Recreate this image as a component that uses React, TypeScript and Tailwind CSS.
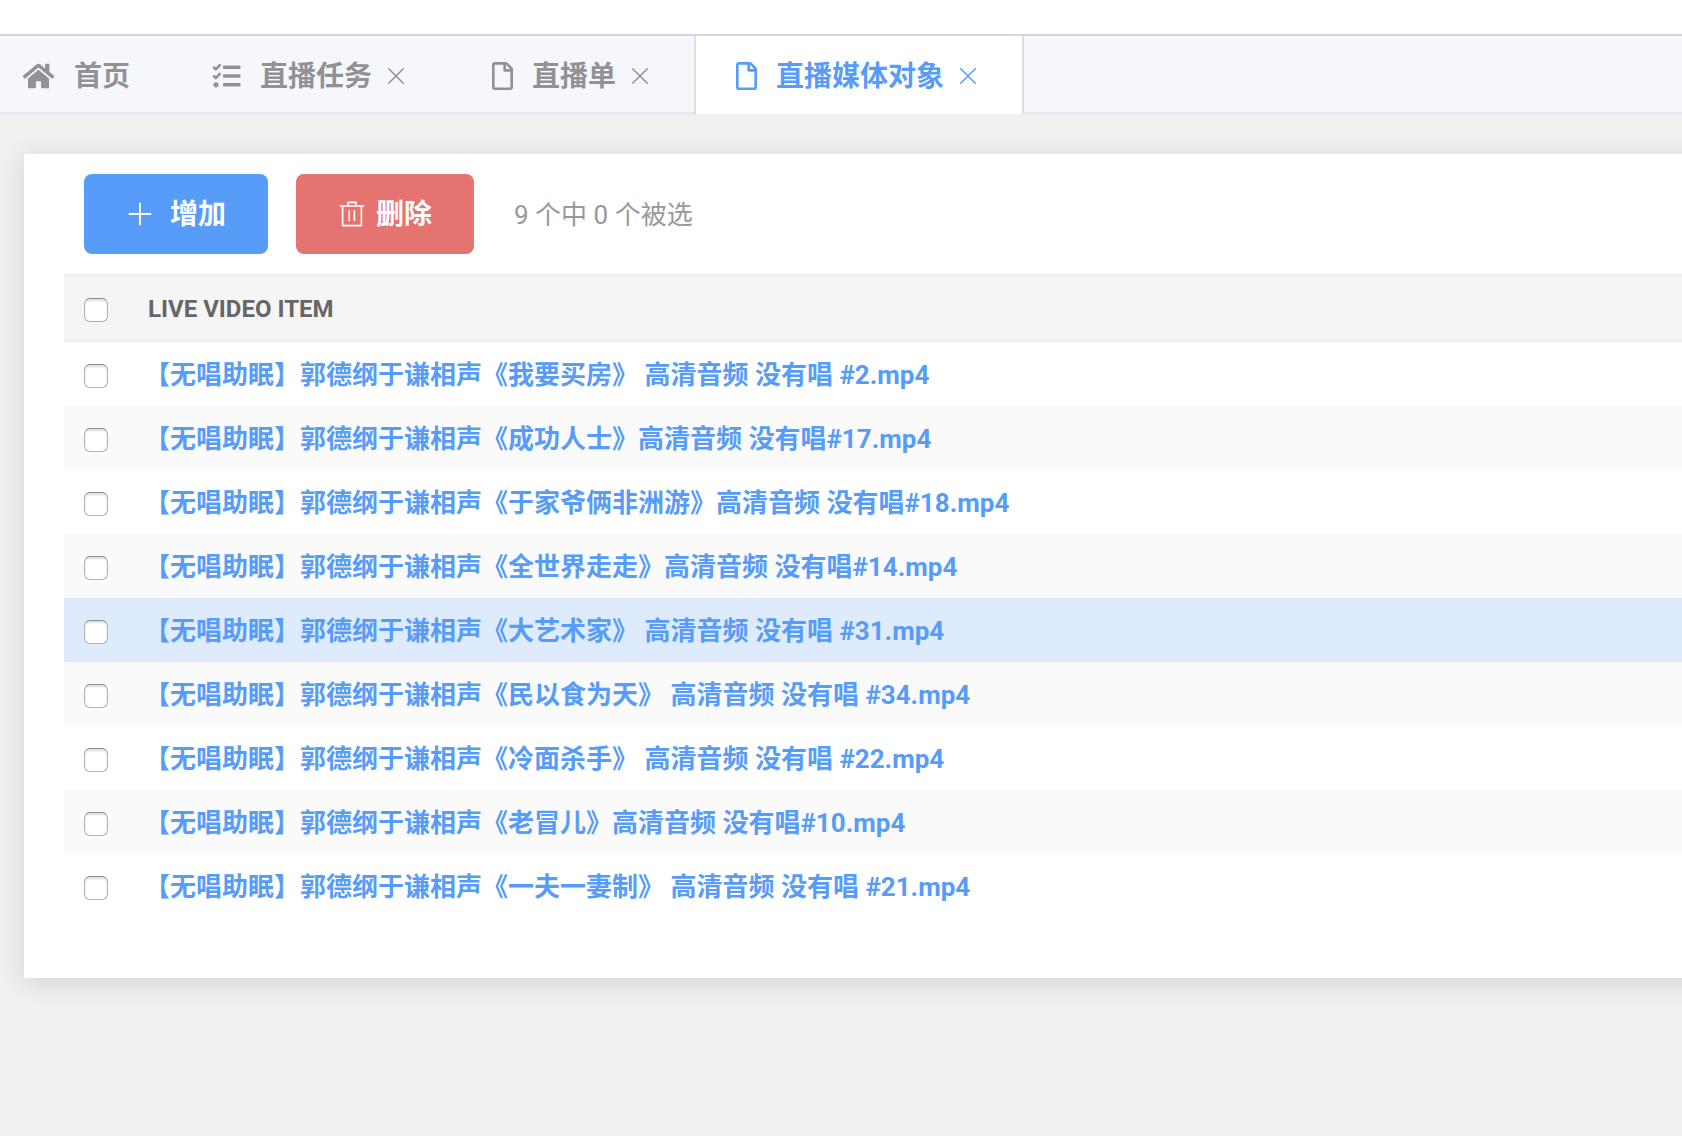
import { useState } from 'react'
import { FaHome, FaTasks, FaRegFile } from 'react-icons/fa'

const tabs = [
  { name: '首页', icon: 'home', closable: false },
  { name: '直播任务', icon: 'tasks', closable: true },
  { name: '直播单', icon: 'file', closable: true },
  { name: '直播媒体对象', icon: 'file', closable: true },
]

const items = [
  '【无唱助眠】郭德纲于谦相声《我要买房》 高清音频 没有唱 #2.mp4',
  '【无唱助眠】郭德纲于谦相声《成功人士》高清音频 没有唱#17.mp4',
  '【无唱助眠】郭德纲于谦相声《于家爷俩非洲游》高清音频 没有唱#18.mp4',
  '【无唱助眠】郭德纲于谦相声《全世界走走》高清音频 没有唱#14.mp4',
  '【无唱助眠】郭德纲于谦相声《大艺术家》 高清音频 没有唱 #31.mp4',
  '【无唱助眠】郭德纲于谦相声《民以食为天》 高清音频 没有唱 #34.mp4',
  '【无唱助眠】郭德纲于谦相声《冷面杀手》 高清音频 没有唱 #22.mp4',
  '【无唱助眠】郭德纲于谦相声《老冒儿》高清音频 没有唱#10.mp4',
  '【无唱助眠】郭德纲于谦相声《一夫一妻制》 高清音频 没有唱 #21.mp4',
]

const checkboxClass =
  'block w-6 h-6 appearance-none rounded-md border border-[#b0b0b0] border-t-[#8a8a8a] bg-white shadow-[inset_0_2px_2px_rgba(0,0,0,0.12)] checked:bg-[#579cf8]'

const TabIcon = ({ icon }: { icon: string }) => {
  if (icon === 'home') return <FaHome className="w-[33px] h-7" />
  if (icon === 'tasks') return <FaTasks className="w-[29px] h-7" />
  return <FaRegFile className="w-[21px] h-7" />
}

const CloseIcon = () => (
  <svg viewBox="0 0 28 28" className="w-7 h-7" fill="none" stroke="currentColor" strokeWidth="1.5" strokeLinecap="round">
    <path d="M6.7 6.7 21.3 21.3M21.3 6.7 6.7 21.3" />
  </svg>
)

const PlusIcon = () => (
  <svg viewBox="0 0 28 28" className="w-7 h-7" fill="none" stroke="currentColor" strokeWidth="1.8" strokeLinecap="round">
    <path d="M14 3.4V24.6M3.4 14H24.6" />
  </svg>
)

const TrashIcon = () => (
  <svg viewBox="0 0 28 28" className="w-7 h-7" fill="none" stroke="currentColor" strokeWidth="1.6" strokeLinecap="round" strokeLinejoin="round">
    <path d="M2.4 6H25.6M4.6 6V25.6H23.4V6M10 6V2.4H18V6M11.2 11V20.4M16.4 11V20.4" />
  </svg>
)

export default function App() {
  const [activeTab, setActiveTab] = useState('直播媒体对象')
  const [selected, setSelected] = useState<number[]>([])

  const toggle = (i: number) => {
    setSelected(selected.includes(i) ? selected.filter((n) => n !== i) : [...selected, i])
  }

  const toggleAll = () => {
    setSelected(selected.length === items.length ? [] : items.map((_, i) => i))
  }

  return (
    <div className="min-h-screen overflow-hidden bg-[#f0f0f0] font-[Roboto,'Noto_Sans_CJK_SC',sans-serif]">
      <header className="h-[34px] bg-white" />

      <nav className="flex h-20 border-t-2 border-[#d1d5df] bg-[#f5f7fb]">
        {tabs.map((tab) => {
          const active = tab.name === activeTab
          return (
            <div
              key={tab.name}
              className={`flex items-center text-[28px] leading-10 font-bold ${
                active
                  ? 'pt-0.5 px-10 border-x-2 border-[#dcdfe6] bg-white text-[#579cf8]'
                  : 'pt-1 pr-10 border-b-2 border-[#e4e7ed] text-[#909297] ' + (tab.closable ? 'pl-[42px]' : 'pl-[22px]')
              }`}
            >
              <button onClick={() => setActiveTab(tab.name)} className="flex items-center gap-[19px] whitespace-nowrap">
                <TabIcon icon={tab.icon} />
                <span className="pt-0.5">{tab.name}</span>
              </button>
              {tab.closable && (
                <button aria-label={`关闭${tab.name}`} className="ml-2.5">
                  <CloseIcon />
                </button>
              )}
            </div>
          )
        })}
        <div className="flex-1 border-b-2 border-[#e4e7ed]" />
      </nav>

      {/* the panel runs on past the right edge of the window */}
      <main className="mt-10 ml-6 -mr-10 pl-10 pb-[60px] bg-white shadow-[0_4px_24px_rgba(0,0,0,0.12)]">
        <div className="flex items-center py-5 pl-5">
          <button className="flex items-center gap-4 h-20 px-[42px] rounded-lg bg-[#579cf8] text-white text-[28px] font-bold whitespace-nowrap">
            <PlusIcon />
            <span className="pt-0.5">增加</span>
          </button>
          <button className="flex items-center gap-2.5 h-20 px-[42px] ml-7 rounded-lg bg-[#e57470] text-white text-[28px] font-bold whitespace-nowrap">
            <TrashIcon />
            <span className="pt-0.5">删除</span>
          </button>
          <span className="ml-10 pt-0.5 text-[26px] text-[#999999]">
            {items.length} 个中 {selected.length} 个被选
          </span>
        </div>

        <table className="w-full border-collapse text-[26px] leading-8">
          <thead>
            <tr className="h-[68px] bg-[#f5f5f5] shadow-[inset_0_2px_#eeeeee,inset_0_-2px_#eeeeee]">
              <th className="w-20 pl-5 pt-1">
                <input
                  type="checkbox"
                  aria-label="全选"
                  className={checkboxClass}
                  checked={selected.length === items.length}
                  onChange={toggleAll}
                />
              </th>
              <th className="pl-1 pt-0.5 text-left text-2xl font-bold text-[#666666]">LIVE VIDEO ITEM</th>
            </tr>
          </thead>
          <tbody>
            {items.map((item, i) => (
              <tr key={item} className={`h-16 ${i === 4 ? 'bg-[#deebfd]' : i % 2 ? 'bg-[#fafafa]' : 'bg-white'}`}>
                <td className="w-20 pl-5 pt-1">
                  <input
                    type="checkbox"
                    aria-label={item}
                    className={checkboxClass}
                    checked={selected.includes(i)}
                    onChange={() => toggle(i)}
                  />
                </td>
                <th scope="row" className="pt-0.5 text-left font-bold text-[#579cf8] whitespace-nowrap">
                  <a href="#">{item}</a>
                </th>
              </tr>
            ))}
          </tbody>
        </table>
      </main>
    </div>
  )
}
